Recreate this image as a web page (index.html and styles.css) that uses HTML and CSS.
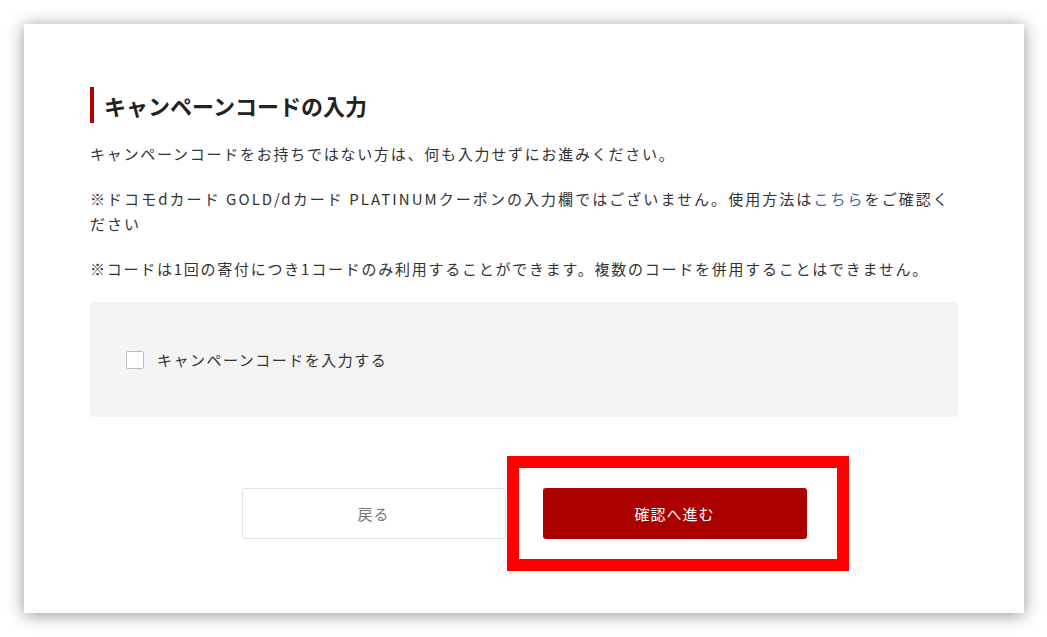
FILE: index.html
```html
<!DOCTYPE html>
<html lang="ja">
<head>
<meta charset="utf-8">
<title>キャンペーンコードの入力</title>
<link rel="stylesheet" href="styles.css">
</head>
<body>
<div class="card">
  <h2 class="heading">キャンペーンコードの入力</h2>
  <p class="text">キャンペーンコードをお持ちではない方は、何も入力せずにお進みください。</p>
  <p class="text text-wide">※ドコモdカード GOLD/dカード PLATINUMクーポンの入力欄ではございません。使用方法は<a class="link" href="#">こちら</a>をご確認ください</p>
  <p class="text">※コードは1回の寄付につき1コードのみ利用することができます。複数のコードを併用することはできません。</p>
  <div class="code-box">
    <label class="check">
      <span class="checkbox"></span>
      <span class="check-label">キャンペーンコードを入力する</span>
    </label>
  </div>
  <div class="actions">
    <button class="btn btn-back">戻る</button>
    <div class="primary-wrap">
      <button class="btn btn-next">確認へ進む</button>
      <span class="highlight"></span>
    </div>
  </div>
</div>
</body>
</html>
```

FILE: styles.css
```css
html, body {
  margin: 0;
  padding: 0;
  background: #ffffff;
}
body {
  padding: 24px;
  font-family: "Noto Sans CJK JP", "Noto Sans", sans-serif;
  color: #333333;
}
.card {
  width: 1000px;
  height: 589px;
  box-sizing: border-box;
  background: #ffffff;
  padding: 63px 66px 0 66px;
  box-shadow: 0 2px 16px rgba(0, 0, 0, 0.42);
}
.heading {
  margin: 0;
  border-left: 4px solid #b00000;
  padding-left: 10px;
  font-size: 22px;
  line-height: 36px;
  font-weight: 700;
  color: #222222;
}
.text {
  margin: 18px 0 0 0;
  font-size: 15px;
  line-height: 25px;
  letter-spacing: 1.75px;
  color: #333333;
}
.text + .text {
  margin-top: 20px;
}
.text-wide {
  letter-spacing: 2.05px;
}
.link {
  color: #3d64a8;
  text-decoration: none;
}
.code-box {
  margin-top: 21px;
  height: 115px;
  background: #f4f4f4;
  border-radius: 3px;
  display: flex;
  align-items: center;
  padding-left: 36px;
}
.check {
  display: flex;
  align-items: center;
  gap: 13px;
}
.checkbox {
  width: 16px;
  height: 16px;
  border: 1px solid #bdbdbd;
  border-radius: 2px;
  background: #ffffff;
}
.check-label {
  font-size: 15px;
  letter-spacing: 1.5px;
  color: #333333;
  line-height: 20px;
}
.actions {
  margin-top: 71px;
  display: flex;
  justify-content: center;
  gap: 37px;
}
.btn {
  width: 264px;
  height: 51px;
  border-radius: 3px;
  font-family: "Noto Sans CJK JP", "Noto Sans", sans-serif;
  font-size: 15px;
  letter-spacing: 1px;
  cursor: pointer;
}
.btn-back {
  background: #ffffff;
  border: 1px solid #e2e2e2;
  color: #777777;
}
.primary-wrap {
  position: relative;
}
.btn-next {
  display: block;
  background: #ab0000;
  border: none;
  color: #ffffff;
}
.highlight {
  position: absolute;
  left: -36px;
  top: -32px;
  right: -42px;
  bottom: -32px;
  border: 12px solid #ff0000;
  pointer-events: none;
}
```
